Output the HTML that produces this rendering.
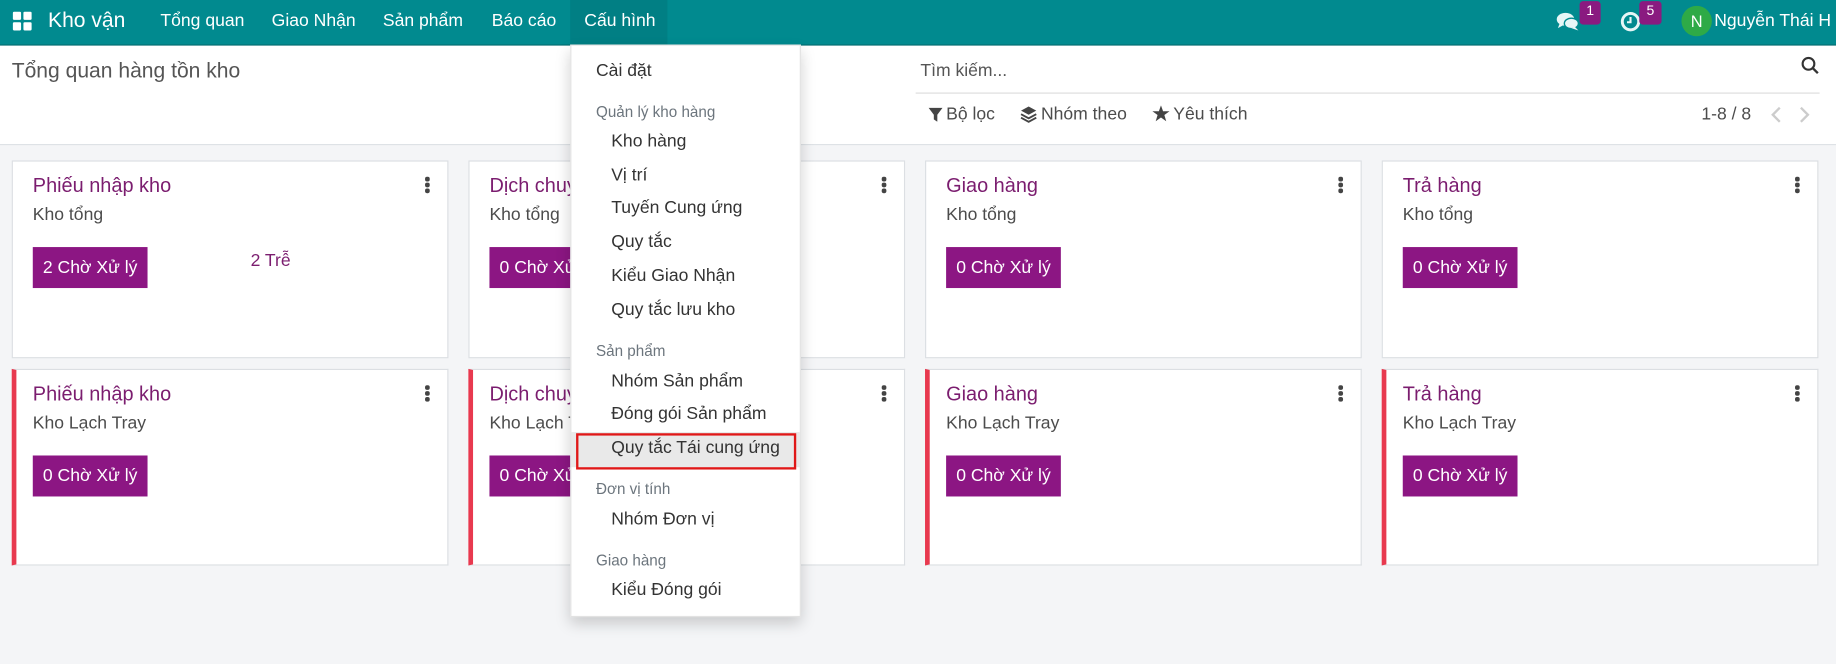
<!DOCTYPE html>
<html><head><meta charset="utf-8">
<style>
html,body{margin:0;padding:0;width:1836px;height:664px;overflow:hidden;background:#f4f5f7;}
#root{position:absolute;left:0;top:0;width:1568px;height:567px;transform:scale(1.17092);transform-origin:0 0;font-family:"Liberation Sans","DejaVu Sans",sans-serif;color:#4c4c4c;background:#f4f5f7;}
.a{position:absolute;white-space:nowrap;line-height:20px;}
.nav{position:absolute;left:0;top:0;width:1568px;height:38px;background:#018a8f;border-bottom:1px solid #036a6e;}
.nav .a{color:#fff;font-size:15px;top:8px;}
.cp{position:absolute;left:0;top:39px;width:1568px;height:84px;background:#fff;border-bottom:1px solid #dee2e6;}
.card{position:absolute;width:371px;background:#fff;border:1px solid #dcdfe3;}
.card .t{position:absolute;left:17px;top:11px;font-size:17px;color:#7b1d6f;white-space:nowrap;line-height:20px;}
.card .s{position:absolute;left:17px;top:36px;font-size:15px;color:#4c4c4c;white-space:nowrap;line-height:20px;}
.card .b{position:absolute;left:17px;top:73px;width:98px;height:35px;background:#8c1683;color:#fff;font-size:15px;line-height:35px;text-align:center;white-space:nowrap;}
.card .k{position:absolute;left:352px;top:13px;width:4px;}
.card .k i{display:block;width:3.5px;height:3.5px;border-radius:50%;background:#444;margin-bottom:1.5px;}
.red{border-left:4px solid #e8394f;}
.red .t,.red .s,.red .b{left:14px;}
.red .k{left:349px;}
.dd{position:absolute;left:487px;top:38px;width:195px;height:487px;background:#fff;border:1px solid #e2e2e2;box-shadow:0 6px 12px rgba(0,0,0,.18);}
.dd .i{position:absolute;left:34px;font-size:15px;color:#333;white-space:nowrap;line-height:20px;}
.dd .h{position:absolute;left:21px;font-size:13px;color:#6c757d;white-space:nowrap;line-height:20px;}
</style></head><body><div id="root">
<div class="nav">
  <div style="position:absolute;left:11px;top:10px;width:7px;height:7px;background:#fff;border-radius:1px"></div>
  <div style="position:absolute;left:20px;top:10px;width:7px;height:7px;background:#fff;border-radius:1px"></div>
  <div style="position:absolute;left:11px;top:19px;width:7px;height:7px;background:#fff;border-radius:1px"></div>
  <div style="position:absolute;left:20px;top:19px;width:7px;height:7px;background:#fff;border-radius:1px"></div>
  <div class="a" style="left:41px;top:7px;font-size:18px">Kho vận</div>
  <div class="a" style="left:137px">Tổng quan</div>
  <div class="a" style="left:232px">Giao Nhận</div>
  <div class="a" style="left:327px">Sản phẩm</div>
  <div class="a" style="left:420px">Báo cáo</div>
  <div style="position:absolute;left:487px;top:0;width:83px;height:38px;background:#017f84"></div>
  <div class="a" style="left:499px">Cấu hình</div>
  <svg style="position:absolute;left:1329px;top:10px" width="20" height="17" viewBox="0 0 20 17"><ellipse cx="8" cy="6.5" rx="7.5" ry="5.5" fill="#e6f6f6"/><path d="M3 10 L1.5 14 L7 11Z" fill="#e6f6f6"/><ellipse cx="13" cy="10" rx="6" ry="4.5" fill="#e6f6f6" stroke="#018a8f" stroke-width="1.2"/><path d="M16 13 L19 16 L13 14Z" fill="#e6f6f6"/></svg>
  <div style="position:absolute;left:1349px;top:1px;width:18px;height:20px;background:#8a1a80;border-radius:3px;color:#fff;font-size:12px;text-align:center;line-height:16px">1</div>
  <svg style="position:absolute;left:1383px;top:9px" width="19" height="19" viewBox="0 0 19 19"><circle cx="9.5" cy="9.5" r="7" fill="none" stroke="#e6f6f6" stroke-width="2.5"/><path d="M9.5 5.5 V10 H6.5" fill="none" stroke="#e6f6f6" stroke-width="1.8"/></svg>
  <div style="position:absolute;left:1400px;top:1px;width:19px;height:20px;background:#8a1a80;border-radius:3px;color:#fff;font-size:12px;text-align:center;line-height:16px">5</div>
  <div style="position:absolute;left:1436px;top:5px;width:26px;height:26px;border-radius:50%;background:#2eaa47;color:#fff;font-size:14px;text-align:center;line-height:26px">N</div>
  <div class="a" style="left:1464px;top:8px;font-size:15px">Nguyễn Thái H</div>
</div>
<div class="cp">
  <div class="a" style="left:10px;top:11px;font-size:18px;color:#555">Tổng quan hàng tồn kho</div>
  <div class="a" style="left:786px;top:12px;font-size:15px;color:#555">Tìm kiếm...</div>
  <div style="position:absolute;left:782px;top:40px;width:772px;height:1px;background:#ddd"></div>
  <svg style="position:absolute;left:1538px;top:9px" width="16" height="16" viewBox="0 0 16 16"><circle cx="6.5" cy="6.5" r="5" fill="none" stroke="#333" stroke-width="1.8"/><path d="M10.2 10.2 L14.5 14.5" stroke="#333" stroke-width="2"/></svg>
  <svg style="position:absolute;left:793px;top:53px" width="12" height="12" viewBox="0 0 12 12"><path d="M0 0H12L7.5 6V12L4.5 10V6Z" fill="#444"/></svg>
  <div class="a" style="left:808px;top:49px;font-size:15px">Bộ lọc</div>
  <svg style="position:absolute;left:871px;top:51px" width="15" height="15" viewBox="0 0 15 15"><path d="M7.5 1 L14 4.5 L7.5 8 L1 4.5Z" fill="#444"/><path d="M1 7.5 L7.5 11 L14 7.5" fill="none" stroke="#444" stroke-width="1.6"/><path d="M1 10.5 L7.5 14 L14 10.5" fill="none" stroke="#444" stroke-width="1.6"/></svg>
  <div class="a" style="left:889px;top:49px;font-size:15px">Nhóm theo</div>
  <svg style="position:absolute;left:984px;top:51px" width="15" height="14" viewBox="0 0 15 14"><path d="M7.5 0 L9.3 5 H14.8 L10.4 8.2 L12 13.6 L7.5 10.4 L3 13.6 L4.6 8.2 L0.2 5 H5.7Z" fill="#444"/></svg>
  <div class="a" style="left:1002px;top:49px;font-size:15px">Yêu thích</div>
  <div class="a" style="left:1453px;top:49px;font-size:15px">1-8 / 8</div>
  <svg style="position:absolute;left:1512px;top:52px" width="10" height="14" viewBox="0 0 10 14"><path d="M8 1 L2 7 L8 13" fill="none" stroke="#ccc" stroke-width="2"/></svg>
  <svg style="position:absolute;left:1536px;top:52px" width="10" height="14" viewBox="0 0 10 14"><path d="M2 1 L8 7 L2 13" fill="none" stroke="#ccc" stroke-width="2"/></svg>
</div>

<div class="card" style="left:10px;top:137px;height:167px"><div class="t">Phiếu nhập kho</div><div class="s">Kho tổng</div><div class="b">2 Chờ Xử lý</div><div class="a" style="left:203px;top:75px;font-size:15px;color:#7b1d6f">2 Trễ</div><div class="k"><i></i><i></i><i></i></div></div>
<div class="card" style="left:400px;top:137px;height:167px"><div class="t">Dịch chuyển nội bộ</div><div class="s">Kho tổng</div><div class="b">0 Chờ Xử lý</div><div class="k"><i></i><i></i><i></i></div></div>
<div class="card" style="left:790px;top:137px;height:167px"><div class="t">Giao hàng</div><div class="s">Kho tổng</div><div class="b">0 Chờ Xử lý</div><div class="k"><i></i><i></i><i></i></div></div>
<div class="card" style="left:1180px;top:137px;height:167px"><div class="t">Trả hàng</div><div class="s">Kho tổng</div><div class="b">0 Chờ Xử lý</div><div class="k"><i></i><i></i><i></i></div></div>

<div class="card red" style="left:10px;top:315px;height:166px;width:368px"><div class="t">Phiếu nhập kho</div><div class="s">Kho Lạch Tray</div><div class="b">0 Chờ Xử lý</div><div class="k"><i></i><i></i><i></i></div></div>
<div class="card red" style="left:400px;top:315px;height:166px;width:368px"><div class="t">Dịch chuyển nội bộ</div><div class="s">Kho Lạch Tray</div><div class="b">0 Chờ Xử lý</div><div class="k"><i></i><i></i><i></i></div></div>
<div class="card red" style="left:790px;top:315px;height:166px;width:368px"><div class="t">Giao hàng</div><div class="s">Kho Lạch Tray</div><div class="b">0 Chờ Xử lý</div><div class="k"><i></i><i></i><i></i></div></div>
<div class="card red" style="left:1180px;top:315px;height:166px;width:368px"><div class="t">Trả hàng</div><div class="s">Kho Lạch Tray</div><div class="b">0 Chờ Xử lý</div><div class="k"><i></i><i></i><i></i></div></div>

<div class="dd">
  <div class="i" style="left:21px;top:12px">Cài đặt</div>
  <div class="h" style="top:47px">Quản lý kho hàng</div>
  <div class="i" style="top:72px">Kho hàng</div>
  <div class="i" style="top:101px">Vị trí</div>
  <div class="i" style="top:129px">Tuyến Cung ứng</div>
  <div class="i" style="top:158px">Quy tắc</div>
  <div class="i" style="top:187px">Kiểu Giao Nhận</div>
  <div class="i" style="top:216px">Quy tắc lưu kho</div>
  <div class="h" style="top:251px">Sản phẩm</div>
  <div class="i" style="top:277px">Nhóm Sản phẩm</div>
  <div class="i" style="top:305px">Đóng gói Sản phẩm</div>
  <div style="position:absolute;left:0;top:330px;width:195px;height:30px;background:#e9e9e9"></div>
  <div style="position:absolute;left:4px;top:331px;width:184px;height:27px;border:2px solid #e01818"></div>
  <div class="i" style="top:334px">Quy tắc Tái cung ứng</div>
  <div class="h" style="top:369px">Đơn vị tính</div>
  <div class="i" style="top:395px">Nhóm Đơn vị</div>
  <div class="h" style="top:430px">Giao hàng</div>
  <div class="i" style="top:455px">Kiểu Đóng gói</div>
</div>
</div></body></html>
